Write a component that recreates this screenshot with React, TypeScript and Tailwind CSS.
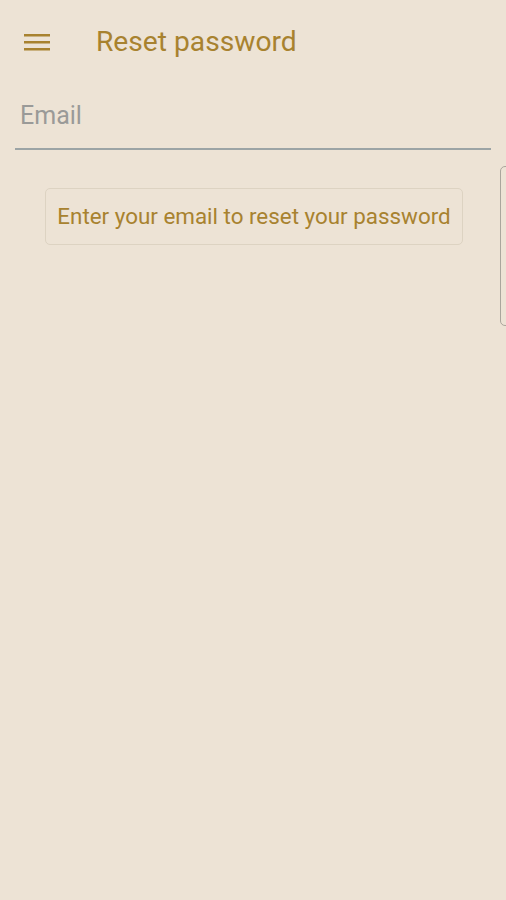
import React from 'react';

export default function App() {
  return (
    <div className="w-[506px] h-[900px] bg-[#ede3d5] overflow-hidden relative font-['Roboto',sans-serif]">
      {/* Top bar */}
      <div className="flex items-center h-[84px]">
        <div className="w-[96px] flex items-center pl-[24px]">
          <svg width="26" height="18" viewBox="0 0 26 18">
            <rect x="0" y="1" width="26" height="2.5" fill="#a8822f" />
            <rect x="0" y="8" width="26" height="2.5" fill="#a8822f" />
            <rect x="0" y="15" width="26" height="2.5" fill="#a8822f" />
          </svg>
        </div>
        <h1 className="text-[28.2px] text-[#a8822f]">Reset password</h1>
      </div>

      {/* Email field */}
      <div className="mx-[15px] border-b-[2px] border-[#9ca4a5] h-[66px] flex items-center px-[5px]">
        <span className="text-[25px] text-[#9a9a98]">Email</span>
      </div>

      {/* Reset button */}
      <div className="flex mt-[38px] pl-[45px]">
        <button className="w-[418px] h-[57px] border border-[#ddd3c2] rounded-[5px] text-[22.4px] text-[#a8822f] flex items-center justify-center whitespace-nowrap">
          Enter your email to reset your password
        </button>
      </div>

      {/* Side tab */}
      <div className="absolute left-[500px] top-[166px] w-[20px] h-[160px] border-[1.5px] border-[#aaa69c] rounded-[5px]" />
    </div>
  );
}
